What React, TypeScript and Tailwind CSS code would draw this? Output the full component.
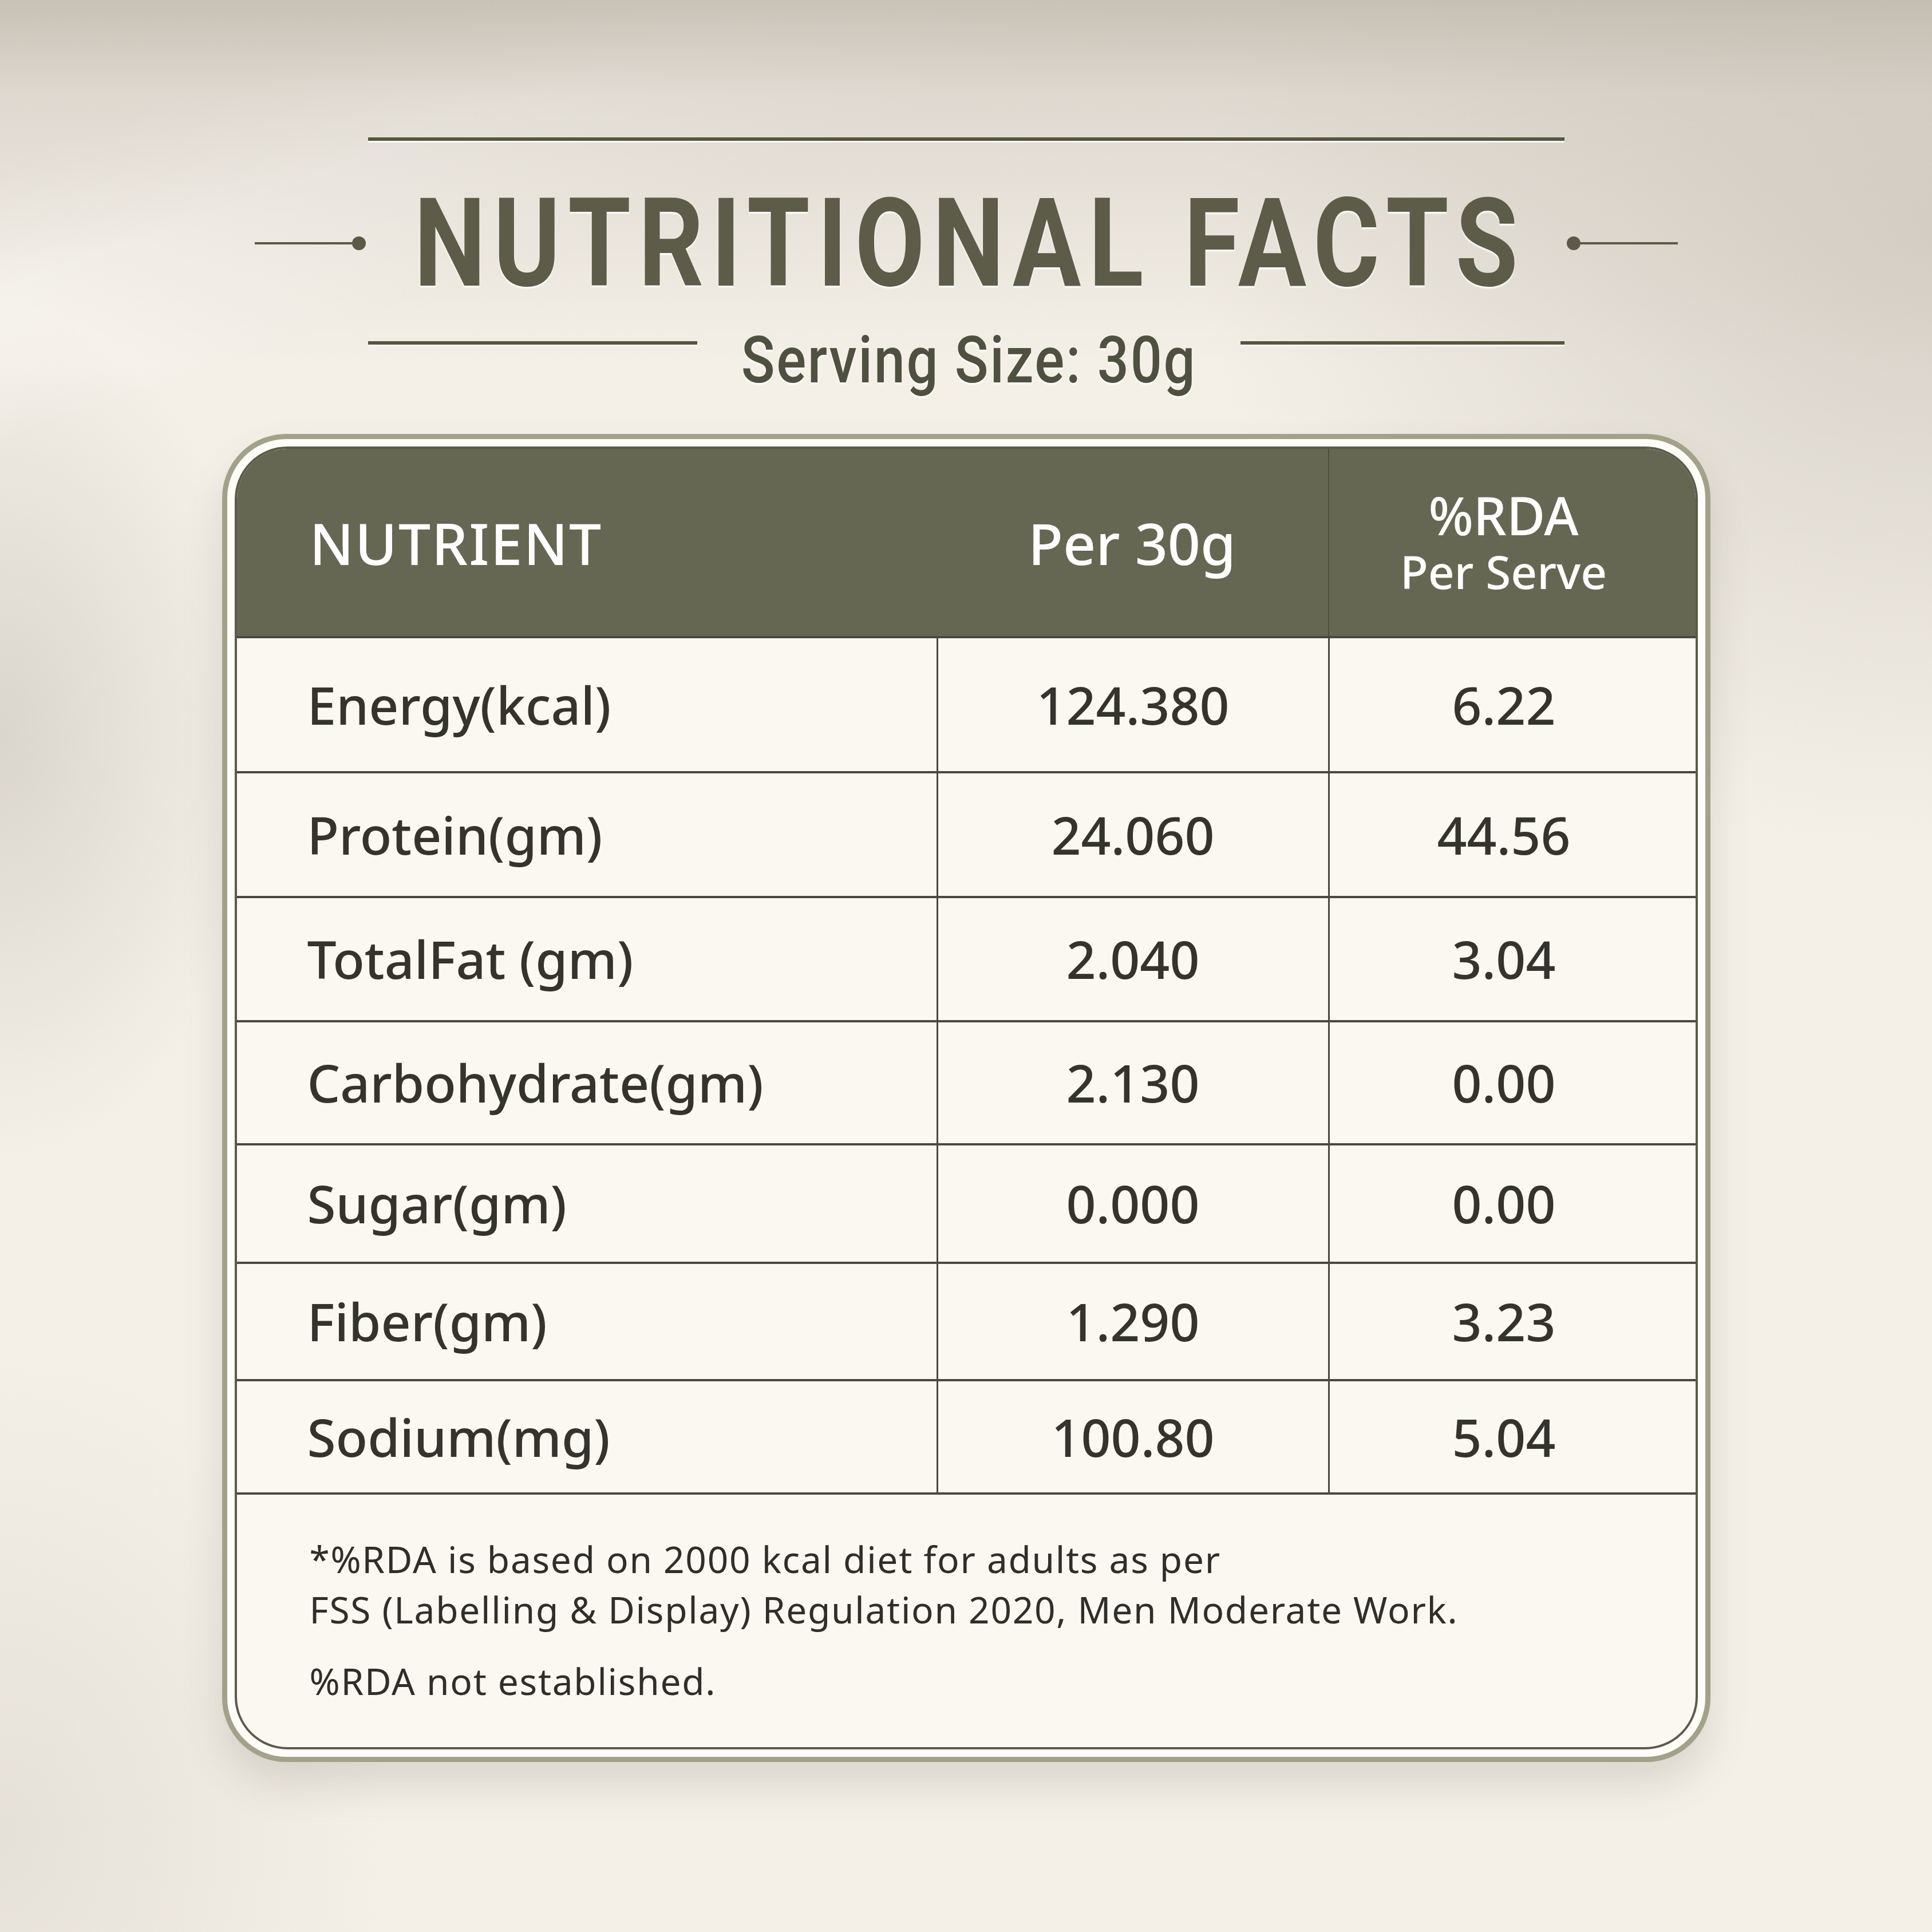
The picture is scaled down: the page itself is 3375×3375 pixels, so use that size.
import React from "react";

// Rows of the label; heights are the row pitch, divider included
const ROWS = [
  { name: "Energy(kcal)", per: "124.380", rda: "6.22", h: "h-[236px]" },
  { name: "Protein(gm)", per: "24.060", rda: "44.56", h: "h-[218px]" },
  { name: "TotalFat (gm)", per: "2.040", rda: "3.04", h: "h-[217px]" },
  { name: "Carbohydrate(gm)", per: "2.130", rda: "0.00", h: "h-[215px]" },
  { name: "Sugar(gm)", per: "0.000", rda: "0.00", h: "h-[207px]" },
  { name: "Fiber(gm)", per: "1.290", rda: "3.23", h: "h-[205px]" },
  { name: "Sodium(mg)", per: "100.80", rda: "5.04", h: "h-[198px]" },
];

// no condensed face installed, so the heading is Roboto squeezed with scale-x
const HEAD = "font-['Roboto','Liberation_Sans',sans-serif] whitespace-nowrap";
const BODY = "font-['Noto_Sans','Open_Sans',sans-serif]";

function Dot() {
  return <div className="w-[24px] h-[24px] rounded-full bg-[#5a5a47] shrink-0" />;
}

function Rule({ w }: { w: string }) {
  return <div className={`${w} h-[6px] mt-[23px] bg-[#56563f] shadow-[0_3px_0_rgba(255,255,255,0.8)] shrink-0`} />;
}

export default function App() {
  return (
    <div className="w-[3375px] h-[3375px] bg-[#f4f0e8] bg-[linear-gradient(180deg,rgba(192,184,172,0.85)_0%,rgba(205,198,188,0.55)_5%,rgba(240,236,229,0)_19%),radial-gradient(ellipse_38%_32%_at_100%_12%,rgba(188,181,170,0.55),rgba(188,181,170,0)),radial-gradient(ellipse_14%_22%_at_0%_38%,rgba(196,191,182,0.55),rgba(196,191,182,0)),radial-gradient(ellipse_20%_25%_at_0%_95%,rgba(214,209,200,0.5),rgba(214,209,200,0)),linear-gradient(160deg,rgba(255,253,248,0)_6%,rgba(255,253,248,0.7)_11%,rgba(255,253,248,0)_17%)] flex flex-col items-center">
      {/* heading */}
      <div className="mt-[240px] w-[2090px] h-[6px] bg-[#56563f] shadow-[0_3px_0_rgba(255,255,255,0.8)]" />

      <div className="mt-[84px] h-[190px] flex items-center">
        <div className="w-[170px] h-[4px] bg-[#5a5a47]" />
        <Dot />
        <div className="mx-[88px] w-[1922px] flex justify-center">
          <h1
            className={`${HEAD} scale-x-[0.826] pl-[16px] text-[215px] leading-none font-bold tracking-[16px] text-[#5c5c48] [text-shadow:0_3px_3px_rgba(255,255,255,0.95)]`}
          >
            NUTRITIONAL FACTS
          </h1>
        </div>
        <Dot />
        <div className="w-[170px] h-[4px] bg-[#5a5a47]" />
      </div>

      <div className="mt-[53px] w-[2090px] flex items-start">
        <Rule w="w-[575px]" />
        <div className="flex-1 flex justify-center">
          <p
            className={`${HEAD} scale-x-[0.86] text-[113px] leading-none font-medium tracking-[3px] text-[#505040] [text-shadow:0_3px_3px_rgba(255,255,255,0.95)]`}
          >
            Serving Size: 30g
          </p>
        </div>
        <Rule w="w-[566px]" />
      </div>

      {/* card */}
      <div className="mt-[72px] w-[2600px] rounded-[112px] border-[9px] border-[#a3a18a] bg-[#fffdf8] p-[13px] shadow-[0_40px_70px_rgba(90,80,60,0.16)]">
        <div className={`${BODY} rounded-[92px] border-[4px] border-[#5b5a4b] overflow-hidden bg-[#fbf8f1]`}>
          {/* header */}
          <div className="h-[327px] flex bg-[#666753] text-white">
            <div className="w-[1222px] pl-[127px] flex items-center text-[100px] font-medium tracking-[2px]">
              NUTRIENT
            </div>
            <div className="w-[684px] flex items-center justify-center text-[100px] font-medium">
              Per 30g
            </div>
            <div className="flex-1 border-l-[2px] border-[#4d4d40] flex flex-col items-center justify-center pr-[30px]">
              <span className="text-[92px] leading-[100px] font-medium">%RDA</span>
              <span className="text-[80px] leading-[96px] font-medium">Per Serve</span>
            </div>
          </div>

          {/* rows */}
          {ROWS.map((r) => (
            <div
              key={r.name}
              className={`${r.h} flex border-t-[4px] border-[#4a493e] text-[91px] font-medium text-[#34332c]`}
            >
              <div className="w-[1222px] pl-[123px] flex items-center">{r.name}</div>
              <div className="w-[684px] border-l-[3px] border-[#4a493e] flex items-center justify-center">
                {r.per}
              </div>
              <div className="flex-1 border-l-[3px] border-[#4a493e] flex items-center justify-center pr-[30px]">
                {r.rda}
              </div>
            </div>
          ))}

          {/* footnote */}
          <div className="h-[445px] border-t-[4px] border-[#4a493e] pl-[127px] pt-[69px] text-[64px] leading-[88px] tracking-[1.7px] text-[#2f2e28]">
            <p>*%RDA is based on 2000 kcal diet for adults as per</p>
            <p>FSS (Labelling &amp; Display) Regulation 2020, Men Moderate Work.</p>
            <p className="mt-[37px]">%RDA not established.</p>
          </div>
        </div>
      </div>
    </div>
  );
}
